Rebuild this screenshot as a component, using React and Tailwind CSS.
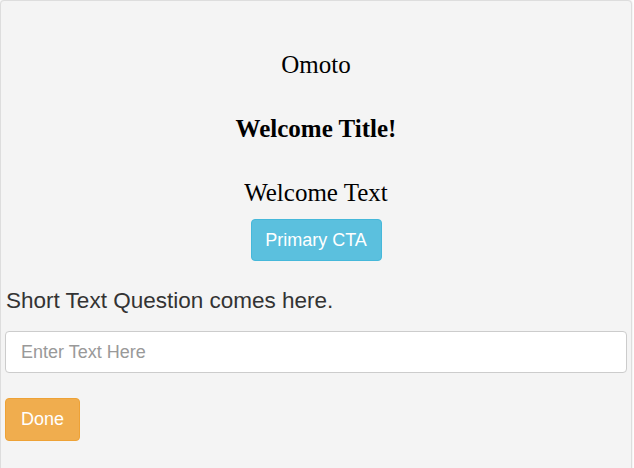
export default function App() {
  return (
    <div className="h-[468px] w-[634px] overflow-hidden bg-white">
      <div className="h-[480px] w-[632px] rounded-t-[4px] border border-[#dddddd] bg-[#f4f4f4] shadow-[0_0_2px_rgba(0,0,0,0.15)]">
        <div className="flex flex-col items-center pt-[48px] font-['Liberation_Serif',serif] text-black">
          <div className="text-[25px] leading-[32px]">Omoto</div>
          <div className="mt-[32px] text-[25px] font-bold leading-[32px]">Welcome Title!</div>
          <div className="mt-[32px] text-[25px] leading-[32px]">Welcome Text</div>
          <button
            type="button"
            className="mt-[10px] h-[42px] w-[131px] rounded-[4px] border border-[#46b8da] bg-[#5bc0de] font-['Liberation_Sans',sans-serif] text-[18px] text-white"
          >
            Primary CTA
          </button>
        </div>
        <div className="px-[4px] font-['Liberation_Sans',sans-serif]">
          <div className="mt-[28px] pl-[1px] text-[22.5px] leading-[24px] text-[#333333]">
            Short Text Question comes here.
          </div>
          <input
            className="mt-[18px] h-[42px] w-[622px] rounded-[4px] border border-[#cccccc] bg-white px-[15px] text-[18px] text-[#555555] outline-none placeholder:text-[#999999]"
            placeholder="Enter Text Here"
          />
          <button
            type="button"
            className="mt-[25px] block h-[43px] w-[75px] rounded-[4px] border border-[#eea236] bg-[#f0ad4e] text-[18px] text-white"
          >
            Done
          </button>
        </div>
      </div>
    </div>
  )
}
